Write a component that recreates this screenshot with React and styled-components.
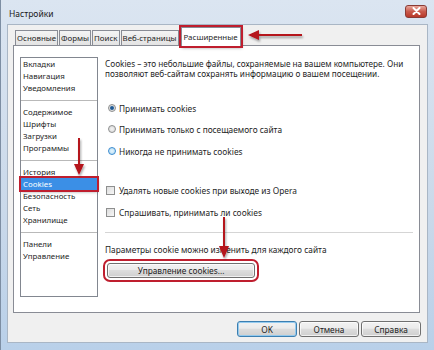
import React from "react";
import styled, { createGlobalStyle } from "styled-components";

const GlobalStyle = createGlobalStyle`
  html, body {
    margin: 0;
    padding: 0;
    background: #cfdcec;
  }
  * {
    box-sizing: border-box;
  }
`;

const Window = styled.div`
  position: relative;
  width: 434px;
  height: 350px;
  display: flex;
  flex-direction: column;
  background: linear-gradient(#dbe5f1, #cad9ea 60%, #b9d0e9);
  border-left: 1px solid #7d8ea3;
  font-family: "Noto Sans", "DejaVu Sans", sans-serif;
  font-size: 8px;
  color: #1e1e1e;
  overflow: hidden;
`;

const TitleBar = styled.div`
  height: 24px;
  display: flex;
  align-items: center;
  justify-content: space-between;
  padding: 0 7px 0 8px;
`;

const Title = styled.span`
  font-size: 8.5px;
  color: #1a1a1a;
  margin-top: 2px;
`;

const CloseButton = styled.div`
  width: 22px;
  height: 13px;
  border-radius: 3px;
  border: 1px solid #8a3b35;
  background: linear-gradient(#e9a79c, #c95a4c 50%, #b8392a);
  display: flex;
  align-items: center;
  justify-content: center;
  margin-top: -2px;
`;

const Client = styled.div`
  flex: 1;
  margin: 0 6px 7px 6px;
  background: #f0f0f0;
  border: 1px solid #a9b6c5;
  display: flex;
  flex-direction: column;
  padding: 2px 7px 0 5px;
`;

const TabRow = styled.div`
  display: flex;
  align-items: flex-end;
  height: 19px;
  padding-left: 2px;
  position: relative;
  z-index: 1;
`;

const Tab = styled.div`
  height: ${(p) => (p.active ? "19px" : "16px")};
  padding: 0 ${(p) => (p.active ? "2px" : "1px")};
  margin-right: ${(p) => (p.active ? "0" : "1px")};
  margin-left: ${(p) => (p.active ? "1px" : "0")};
  display: flex;
  align-items: center;
  background: ${(p) =>
    p.active ? "#ffffff" : "linear-gradient(#f4f4f4, #e3e3e3)"};
  border: 1px solid #898c95;
  border-bottom: ${(p) => (p.active ? "none" : "1px solid #898c95")};
  font-size: 7.9px;
  white-space: nowrap;
  outline: ${(p) => (p.marked ? "2px solid #bf1e2e" : "none")};
  box-shadow: ${(p) => (p.marked ? "1px 2px 3px rgba(0,0,0,0.35)" : "none")};
`;

const Panel = styled.div`
  height: 268px;
  background: #ffffff;
  border: 1px solid #898c95;
  margin-top: -1px;
  display: flex;
  padding: 11px 0 0 6px;
`;

const SideList = styled.div`
  width: 78px;
  height: 240px;
  border: 1px solid #828790;
  display: flex;
  flex-direction: column;
  flex-shrink: 0;
`;

const ListItem = styled.div`
  height: 12px;
  line-height: 12px;
  padding-left: 2px;
  font-size: 7.9px;
  white-space: nowrap;
  background: ${(p) => (p.selected ? "#3b8fe6" : "transparent")};
  color: ${(p) => (p.selected ? "#ffffff" : "#1e1e1e")};
  outline: ${(p) => (p.marked ? "2px solid #bf1e2e" : "none")};
  box-shadow: ${(p) => (p.marked ? "1px 2px 3px rgba(0,0,0,0.35)" : "none")};
`;

const ListSeparator = styled.div`
  height: 12px;
  display: flex;
  align-items: center;
  &::after {
    content: "";
    flex: 1;
    height: 1px;
    background: #b9b9b9;
  }
`;

const Content = styled.div`
  flex: 1;
  display: flex;
  flex-direction: column;
  padding: 2px 6px 0 7px;
`;

const Intro = styled.p`
  margin: 0;
  font-size: 8.2px;
  line-height: 10px;
  width: 302px;
`;

const OptionRow = styled.label`
  display: flex;
  align-items: center;
  height: 12px;
  margin-top: ${(p) => p.gap}px;
  padding-left: ${(p) => (p.box ? "1px" : "3px")};
  font-size: 8.3px;
  white-space: nowrap;
`;

const Radio = styled.span`
  width: 8px;
  height: 8px;
  border-radius: 50%;
  border: 1px solid ${(p) => (p.hover ? "#3c8ccf" : "#8e8f8f")};
  background: ${(p) =>
    p.hover
      ? "radial-gradient(#e6f5fd, #aad8f3)"
      : "radial-gradient(#f4f4f4, #d4d4d4)"};
  margin-right: 3px;
  display: flex;
  align-items: center;
  justify-content: center;
  &::after {
    content: "";
    display: ${(p) => (p.checked ? "block" : "none")};
    width: 4px;
    height: 4px;
    border-radius: 50%;
    background: #1f5a96;
  }
`;

const CheckBox = styled.span`
  width: 9px;
  height: 9px;
  border: 1px solid #8e8f8f;
  background: linear-gradient(135deg, #dcdcdc, #f7f7f7);
  margin-right: 4px;
`;

const Rule = styled.div`
  height: 1px;
  background: #d5d5d5;
  margin-top: 14px;
`;

const Note = styled.div`
  margin-top: 11px;
  font-size: 8.3px;
  white-space: nowrap;
`;

const Button = styled.div`
  height: ${(p) => (p.small ? "16px" : "15px")};
  width: ${(p) => p.w}px;
  display: flex;
  align-items: center;
  justify-content: center;
  border: 1px solid ${(p) => (p.focus ? "#3c7fb1" : "#707070")};
  border-radius: 3px;
  background: linear-gradient(#f2f2f2 0%, #ebebeb 45%, #dddddd 50%, #cfcfcf 100%);
  box-shadow: inset 0 0 0 1px
    ${(p) => (p.focus ? "rgba(140,200,240,0.9)" : "rgba(255,255,255,0.7)")};
  font-size: 8.3px;
  white-space: nowrap;
  outline: ${(p) => (p.marked ? "2px solid #bf1e2e" : "none")};
  outline-offset: 2px;
`;

const ManageButton = styled(Button)`
  margin-top: 8px;
  margin-left: 2px;
`;

const Footer = styled.div`
  flex: 1;
  display: flex;
  justify-content: flex-end;
  align-items: flex-start;
  gap: 2px;
  padding-top: 8px;
  margin-right: -1px;
`;

const Overlay = styled.svg`
  position: absolute;
  left: 0;
  top: 0;
  pointer-events: none;
`;

const sections = [
  ["Вкладки", "Навигация", "Уведомления"],
  ["Содержимое", "Шрифты", "Загрузки", "Программы"],
  ["История", "Cookies", "Безопасность", "Сеть", "Хранилище"],
  ["Панели", "Управление"],
];

const tabs = ["Основные", "Формы", "Поиск", "Веб-страницы", "Расширенные"];

const Arrows = () => (
  <Overlay width="434" height="350">
    <defs>
      <filter id="sh" x="-50%" y="-50%" width="200%" height="200%">
        <feDropShadow dx="1" dy="2" stdDeviation="1.2" floodOpacity="0.35" />
      </filter>
    </defs>
    <g fill="#b5121b" stroke="#b5121b" filter="url(#sh)">
      <line x1="301" y1="35" x2="256" y2="35" strokeWidth="2" />
      <polygon points="247,35 258,30 258,40" stroke="none" />
      <line x1="78" y1="138" x2="78" y2="166" strokeWidth="2" />
      <polygon points="78,175 73,164 83,164" stroke="none" />
      <line x1="223" y1="217" x2="223" y2="248" strokeWidth="2" />
      <polygon points="223,258 218,246 228,246" stroke="none" />
    </g>
  </Overlay>
);

const App = () => (
  <>
    <GlobalStyle />
    <Window>
      <TitleBar>
        <Title>Настройки</Title>
        <CloseButton>
          <svg width="9" height="8" viewBox="0 0 9 8">
            <path
              d="M1.5 1 L7.5 7 M7.5 1 L1.5 7"
              stroke="#ffffff"
              strokeWidth="2"
              strokeLinecap="round"
            />
          </svg>
        </CloseButton>
      </TitleBar>
      <Client>
        <TabRow>
          {tabs.map((t, i) => (
            <Tab key={t} active={i === 4} marked={i === 4}>
              {t}
            </Tab>
          ))}
        </TabRow>
        <Panel>
          <SideList>
            {sections.map((group, gi) => (
              <React.Fragment key={gi}>
                {gi > 0 && <ListSeparator />}
                {group.map((item) => (
                  <ListItem
                    key={item}
                    selected={item === "Cookies"}
                    marked={item === "Cookies"}
                  >
                    {item}
                  </ListItem>
                ))}
              </React.Fragment>
            ))}
          </SideList>
          <Content>
            <Intro>
              Cookies – это небольшие файлы, сохраняемые на вашем компьютере.
              Они позволяют веб-сайтам сохранять информацию о вашем посещении.
            </Intro>
            <OptionRow gap={23}>
              <Radio checked />
              Принимать cookies
            </OptionRow>
            <OptionRow gap={9}>
              <Radio />
              Принимать только с посещаемого сайта
            </OptionRow>
            <OptionRow gap={10}>
              <Radio hover />
              Никогда не принимать cookies
            </OptionRow>
            <OptionRow gap={27} box>
              <CheckBox />
              Удалять новые cookies при выходе из Opera
            </OptionRow>
            <OptionRow gap={10} box>
              <CheckBox />
              Спрашивать, принимать ли cookies
            </OptionRow>
            <Rule />
            <Note>Параметры cookie можно изменить для каждого сайта</Note>
            <ManageButton w={148} marked>
              Управление cookies...
            </ManageButton>
          </Content>
        </Panel>
        <Footer>
          <Button small focus w={60}>
            OK
          </Button>
          <Button small w={60}>
            Отмена
          </Button>
          <Button small w={60}>
            Справка
          </Button>
        </Footer>
      </Client>
      <Arrows />
    </Window>
  </>
);

export default App;
